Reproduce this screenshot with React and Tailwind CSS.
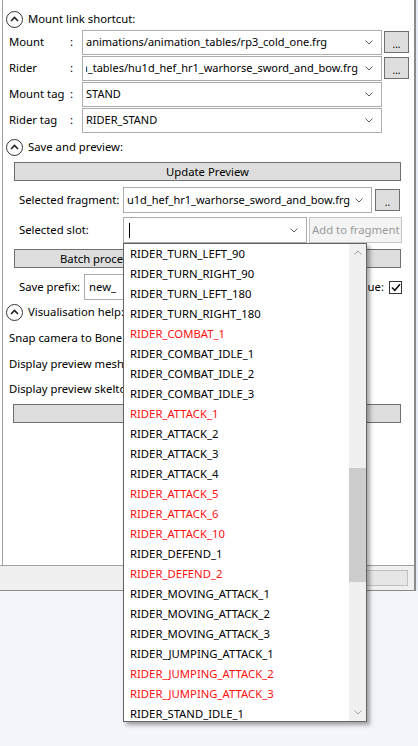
import React from "react";

const slots = [
  ["RIDER_TURN_LEFT_90", false],
  ["RIDER_TURN_RIGHT_90", false],
  ["RIDER_TURN_LEFT_180", false],
  ["RIDER_TURN_RIGHT_180", false],
  ["RIDER_COMBAT_1", true],
  ["RIDER_COMBAT_IDLE_1", false],
  ["RIDER_COMBAT_IDLE_2", false],
  ["RIDER_COMBAT_IDLE_3", false],
  ["RIDER_ATTACK_1", true],
  ["RIDER_ATTACK_2", false],
  ["RIDER_ATTACK_3", false],
  ["RIDER_ATTACK_4", false],
  ["RIDER_ATTACK_5", true],
  ["RIDER_ATTACK_6", true],
  ["RIDER_ATTACK_10", true],
  ["RIDER_DEFEND_1", false],
  ["RIDER_DEFEND_2", true],
  ["RIDER_MOVING_ATTACK_1", false],
  ["RIDER_MOVING_ATTACK_2", false],
  ["RIDER_MOVING_ATTACK_3", false],
  ["RIDER_JUMPING_ATTACK_1", false],
  ["RIDER_JUMPING_ATTACK_2", true],
  ["RIDER_JUMPING_ATTACK_3", true],
  ["RIDER_STAND_IDLE_1", false],
];

function Chevron({ up = false, color = "#606060" }) {
  return (
    <svg width="8" height="5" viewBox="0 0 8 5" className="shrink-0">
      <path
        d={up ? "M0.5 4.5 L4 1 L7.5 4.5" : "M0.5 0.5 L4 4 L7.5 0.5"}
        fill="none"
        stroke={color}
        strokeWidth="1"
      />
    </svg>
  );
}

function ExpanderHeader({ title, className = "" }) {
  return (
    <div className={`flex items-center h-[17px] ${className}`}>
      <svg width="17" height="17" viewBox="0 0 17 17" className="ml-[3px] shrink-0">
        <circle cx="8.5" cy="8.5" r="8" fill="white" stroke="#333" strokeWidth="1" />
        <path d="M5 10 L8.5 6.5 L12 10" fill="none" stroke="#222" strokeWidth="1.6" />
      </svg>
      <span className="ml-[5px] whitespace-nowrap">{title}</span>
    </div>
  );
}

function Combo({ value, cursor = false, shift = "" }) {
  return (
    <div className="flex items-center h-full border border-[#acacac] bg-white pl-[3px] pr-[8px] overflow-hidden">
      <div className="flex-1 flex overflow-hidden whitespace-nowrap mr-[4px] text-[11px]">
        {cursor ? (
          <div className="w-px h-[15px] bg-black ml-[2px]" />
        ) : (
          <span className={`shrink-0 ${shift}`}>{value}</span>
        )}
      </div>
      <Chevron />
    </div>
  );
}

function FieldRow({ label, value, button, shift }) {
  return (
    <div className="flex items-center h-[26px]">
      <div className="w-[67px] pl-[6px] whitespace-nowrap">{label}</div>
      <div className="w-[12px]">:</div>
      <div className="w-[300px] h-[25px]">
        <Combo value={value} shift={shift} />
      </div>
      {button && (
        <button className="ml-[2px] w-[25px] h-[22px] border border-[#707070] bg-[#dddddd] text-[10px] leading-none pt-[4px]">
          ...
        </button>
      )}
    </div>
  );
}

export default function App() {
  return (
    <div
      className="relative w-[418px] h-[746px] bg-[#f4f5fa] overflow-hidden text-[11.3px] text-black"
      style={{ fontFamily: '"Noto Sans", "Open Sans", sans-serif' }}
    >
      <div className="flex">
        <div className="w-[416px] h-[591px] bg-white flex flex-col border-r-2 border-b border-[#8a8a8a]">
          <div className="flex-1 ml-[2px] border-l border-[#a0a0a0] flex flex-col">
            <ExpanderHeader title="Mount link shortcut:" className="mt-[11px]" />

            <div className="mt-[1px] flex flex-col">
              <FieldRow
                label="Mount"
                value="animations/animation_tables/rp3_cold_one.frg"
                button
              />
              <FieldRow
                label="Rider"
                value="n_tables/hu1d_hef_hr1_warhorse_sword_and_bow.frg"
                shift="-ml-[5px]"
                button
              />
              <FieldRow label="Mount tag" value="STAND" />
              <FieldRow label="Rider tag" value="RIDER_STAND" />
            </div>

            <ExpanderHeader title="Save and preview:" className="mt-[6px]" />

            <div className="pl-[11px] pr-[12px] flex flex-col">
              <button className="mt-[6px] h-[19px] w-[387px] border border-[#707070] bg-[#dddddd] leading-none">
                Update Preview
              </button>

              <div className="mt-[6px] flex items-center h-[26px]">
                <div className="w-[109px] pl-[5px] whitespace-nowrap">Selected fragment:</div>
                <div className="w-[249px] h-full">
                  <Combo value="u1d_hef_hr1_warhorse_sword_and_bow.frg" />
                </div>
                <button className="ml-[3px] w-[25px] h-[22px] border border-[#707070] bg-[#dddddd] text-[10px] leading-none pt-[4px]">
                  ..
                </button>
              </div>

              <div className="mt-[4px] flex items-center h-[26px]">
                <div className="w-[109px] pl-[5px] whitespace-nowrap">Selected slot:</div>
                <div className="w-[184px] h-full">
                  <Combo cursor />
                </div>
                <button className="ml-[2px] w-[93px] h-full border border-[#c4c4c4] bg-[#f4f4f4] text-[#9a9a9a] leading-none whitespace-nowrap px-[2px] text-left">
                  Add to fragment
                </button>
              </div>

              <button className="mt-[6px] h-[19px] w-[387px] border border-[#707070] bg-[#dddddd] leading-none text-left pl-[45px] whitespace-nowrap overflow-hidden">
                Batch proce
              </button>

              <div className="mt-[6px] flex items-center h-[26px]">
                <div className="w-[70px] pl-[5px] whitespace-nowrap">Save prefix:</div>
                <div className="w-[120px] h-full border border-[#acacac] flex items-center pl-[4px]">
                  new_
                </div>
                <div className="flex-1 flex justify-end items-center">
                  <span className="mr-[5px]">ue:</span>
                  <div className="w-[13px] h-[13px] border border-[#333] flex items-center justify-center">
                    <svg width="10" height="9" viewBox="0 0 10 9">
                      <path d="M1 4.5 L3.8 7.3 L9 1.2" fill="none" stroke="#111" strokeWidth="1.6" />
                    </svg>
                  </div>
                </div>
              </div>
            </div>

            <ExpanderHeader title="Visualisation help:" className="mt-[4px]" />

            <div className="flex flex-col pl-[6px] whitespace-nowrap">
              <div className="mt-[8px] h-[18px] flex items-center">Snap camera to Bone</div>
              <div className="mt-[8px] h-[18px] flex items-center">Display preview mesh</div>
              <div className="mt-[7px] h-[18px] flex items-center">Display preview skelto</div>
            </div>
            <div className="pl-[10px]">
              <div className="mt-[6px] h-[19px] w-[388px] border border-[#707070] bg-[#dddddd]" />
            </div>
          </div>

          <div className="h-[25px] border-t border-[#a0a0a0] bg-[#f0f0f0] flex items-center">
            <div className="ml-[250px] w-[158px] h-[16px] border border-[#c0c0c0] bg-[#e6e6e6]" />
          </div>
        </div>
        <div className="w-[2px] h-[591px] bg-[#e8ecf4]" />
      </div>

      <div className="absolute left-[123px] top-[243px] w-[244px] h-[479px] bg-white border border-[#646464] shadow-[3px_3px_4px_rgba(0,0,0,0.35)] flex overflow-hidden">
        <div className="flex-1 flex flex-col">
          {slots.map(([name, red]) => (
            <div
              key={name}
              className={`h-[20px] shrink-0 flex items-center pl-[6px] whitespace-nowrap ${red ? "text-[#ff1010]" : "text-black"}`}
            >
              {name}
            </div>
          ))}
        </div>
        <div className="w-[17px] h-full bg-[#f0f0f0] flex flex-col items-center">
          <div className="h-[17px] flex items-center justify-center">
            <Chevron up color="#a0a0a0" />
          </div>
          <div className="mt-[207px] w-[17px] h-[114px] bg-[#cdcdcd]" />
          <div className="mt-auto h-[17px] flex items-center justify-center">
            <Chevron color="#a0a0a0" />
          </div>
        </div>
      </div>
    </div>
  );
}
